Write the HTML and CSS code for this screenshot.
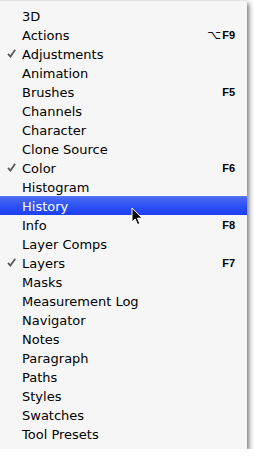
FILE: index.html
```html
<!DOCTYPE html>
<html lang="en">

<head>
    <meta charset="UTF-8">
    <title>Window menu</title>
    <link rel="stylesheet" href="styles.css">
</head>

<body>
    <div class="menu">
        <div class="item"><span class="mark"></span><span class="label">3D</span></div>
        <div class="item"><span class="mark"></span><span class="label">Actions</span><span class="key"><span class="opt">⌥</span>F9</span></div>
        <div class="item"><span class="mark"><svg width="9" height="9" viewBox="0 0 9 9"><path d="M1 4.8 L3.4 7.6 L8.2 0.8" fill="none" stroke="#5a5a5a" stroke-width="1.8"/></svg></span><span class="label">Adjustments</span></div>
        <div class="item"><span class="mark"></span><span class="label">Animation</span></div>
        <div class="item"><span class="mark"></span><span class="label">Brushes</span><span class="key">F5</span></div>
        <div class="item"><span class="mark"></span><span class="label">Channels</span></div>
        <div class="item"><span class="mark"></span><span class="label">Character</span></div>
        <div class="item"><span class="mark"></span><span class="label">Clone Source</span></div>
        <div class="item"><span class="mark"><svg width="9" height="9" viewBox="0 0 9 9"><path d="M1 4.8 L3.4 7.6 L8.2 0.8" fill="none" stroke="#5a5a5a" stroke-width="1.8"/></svg></span><span class="label">Color</span><span class="key">F6</span></div>
        <div class="item"><span class="mark"></span><span class="label">Histogram</span></div>
        <div class="item active"><span class="mark"></span><span class="label">History</span></div>
        <div class="item"><span class="mark"></span><span class="label">Info</span><span class="key">F8</span></div>
        <div class="item"><span class="mark"></span><span class="label">Layer Comps</span></div>
        <div class="item"><span class="mark"><svg width="9" height="9" viewBox="0 0 9 9"><path d="M1 4.8 L3.4 7.6 L8.2 0.8" fill="none" stroke="#5a5a5a" stroke-width="1.8"/></svg></span><span class="label">Layers</span><span class="key">F7</span></div>
        <div class="item"><span class="mark"></span><span class="label">Masks</span></div>
        <div class="item"><span class="mark"></span><span class="label">Measurement Log</span></div>
        <div class="item"><span class="mark"></span><span class="label">Navigator</span></div>
        <div class="item"><span class="mark"></span><span class="label">Notes</span></div>
        <div class="item"><span class="mark"></span><span class="label">Paragraph</span></div>
        <div class="item"><span class="mark"></span><span class="label">Paths</span></div>
        <div class="item"><span class="mark"></span><span class="label">Styles</span></div>
        <div class="item"><span class="mark"></span><span class="label">Swatches</span></div>
        <div class="item"><span class="mark"></span><span class="label">Tool Presets</span></div>

        <!-- mouse pointer over History -->
        <svg class="cursor" width="13" height="20" viewBox="0 0 13 20">
            <path d="M1 1 L1 15 L4.2 12 L6.6 17.6 L8.8 16.6 L6.5 11.2 L11 11.2 Z" fill="#000" stroke="#fff" stroke-width="1"/>
        </svg>
    </div>
</body>

</html>
```

FILE: styles.css
```css
body {
    margin: 0;
    background: #fff;
}

.menu {
    position: relative;
    width: 247px;
    padding: 5px 0 6px;
    background: #f6f6f6;
    border-top: 1px solid #e4e4e4;
    box-sizing: border-box;
    box-shadow: 2px 3px 5px rgba(0, 0, 0, 0.55);
    font-family: "DejaVu Sans", sans-serif;
    font-size: 13px;
    color: #000;
}

.item {
    display: flex;
    align-items: center;
    height: 19px;
    padding-right: 12px;
}

.mark {
    width: 22px;
    display: flex;
    justify-content: center;
    padding-left: 1px;
    box-sizing: border-box;
}

.label {
    flex: 1;
    padding-top: 1px;
}

.key {
    font-family: "Liberation Sans", sans-serif;
    font-weight: bold;
    font-size: 11px;
    padding-top: 1px;
}

.opt {
    font-family: "DejaVu Sans", sans-serif;
    font-weight: normal;
    font-size: 12px;
    margin-right: 1px;
}

.active {
    background: linear-gradient(#5b7bf3, #4868f2 10%, #2a4ef5 60%, #1c3ff6);
    color: #fff;
}

.cursor {
    position: absolute;
    left: 131px;
    top: 206px;
}
```
